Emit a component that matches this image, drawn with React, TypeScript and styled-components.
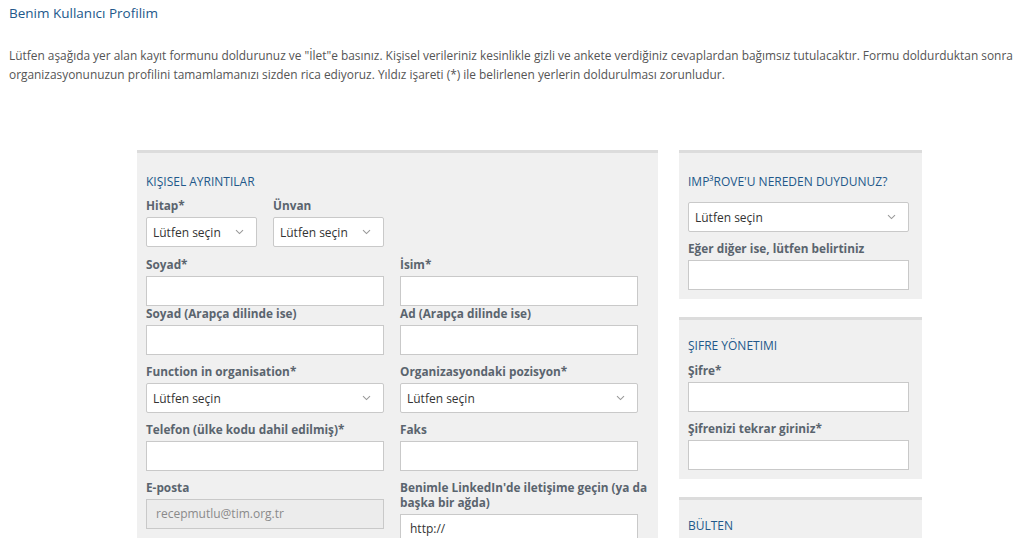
import React from "react";
import styled, { createGlobalStyle } from "styled-components";

const Global = createGlobalStyle`
  html, body { margin: 0; padding: 0; background: #fff; }
  body { font-family: "Open Sans", "Liberation Sans", sans-serif; }
  * { box-sizing: border-box; }
`;

const Page = styled.div`
  padding: 3px 9px 0 9px;
  width: 1024px;
  height: 538px;
  overflow: hidden;
`;

const Title = styled.h1`
  margin: 0;
  font-size: 13.5px;
  font-weight: 400;
  line-height: 20px;
  color: #22588a;
`;

const Intro = styled.p`
  margin: 23px 0 0 0;
  font-size: 11.9px;
  line-height: 19px;
  color: #555;
  white-space: nowrap;
`;

const Columns = styled.div`
  display: flex;
  gap: 21px;
  margin: 66px 0 0 128px;
  align-items: flex-start;
`;

const Side = styled.div`
  display: flex;
  flex-direction: column;
  gap: 18px;
`;

const Panel = styled.section<{ $w: number; $minH?: number; $pt?: number }>`
  width: ${(p) => p.$w}px;
  min-height: ${(p) => p.$minH ?? 0}px;
  background: #f0f0f0;
  border-top: 3px solid #dcdcdc;
  padding: ${(p) => p.$pt ?? 20}px 13px 9px 9px;
  & > *:last-child {
    margin-bottom: 0;
  }
`;

const Heading = styled.h2<{ $mb?: number }>`
  margin: 0 0 ${(p) => p.$mb ?? 7}px 0;
  font-size: 12px;
  font-weight: 400;
  line-height: 18px;
  color: #22588a;
  text-transform: uppercase;
`;

const Grid = styled.div`
  display: grid;
  grid-template-columns: 238px 238px;
  column-gap: 16px;
  align-items: end;
`;

const Field = styled.div<{ $mt?: number; $top?: boolean }>`
  display: flex;
  flex-direction: column;
  margin-top: ${(p) => p.$mt ?? 0}px;
  margin-bottom: 9px;
  align-self: ${(p) => (p.$top ? "start" : "auto")};
`;

const Label = styled.label`
  font-size: 11.8px;
  font-weight: 700;
  line-height: 15px;
  color: #5a646e;
  margin-bottom: 4px;
  white-space: nowrap;
`;

const Input = styled.div<{ $disabled?: boolean }>`
  height: 30px;
  border: 1px solid #c9c9c9;
  background: ${(p) => (p.$disabled ? "#ececec" : "#fff")};
  color: ${(p) => (p.$disabled ? "#8a8a8a" : "#333")};
  font-size: 12px;
  line-height: 28px;
  padding: 0 9px;
`;

const SelectBox = styled.div<{ $w?: number }>`
  height: 30px;
  width: ${(p) => (p.$w ? `${p.$w}px` : "100%")};
  border: 1px solid #c9c9c9;
  border-radius: 2px;
  background: #fff;
  display: flex;
  align-items: center;
  justify-content: space-between;
  padding: 0 12px 0 6px;
  font-size: 12px;
  color: #333;
`;

const Row = styled.div`
  display: flex;
  gap: 16px;
  padding-bottom: 1px;
`;

const Chevron = () => (
  <svg width="9" height="6" viewBox="0 0 9 6">
    <path d="M1 1.2 L4.5 4.6 L8 1.2" fill="none" stroke="#999" strokeWidth="1.1" />
  </svg>
);

const Select = ({ w }: { w?: number }) => (
  <SelectBox $w={w}>
    <span>Lütfen seçin</span>
    <Chevron />
  </SelectBox>
);

export default function App() {
  return (
    <Page>
      <Global />
      <Title>Benim Kullanıcı Profilim</Title>
      <Intro>
        Lütfen aşağıda yer alan kayıt formunu doldurunuz ve "İlet"e basınız. Kişisel verileriniz kesinlikle gizli ve ankete
        verdiğiniz cevaplardan bağımsız tutulacaktır. Formu doldurduktan sonra
        <br />
        organizasyonunuzun profilini tamamlamanızı sizden rica ediyoruz. Yıldız işareti (*) ile belirlenen yerlerin
        doldurulması zorunludur.
      </Intro>
      <Columns>
        <Panel $w={521} $minH={420}>
          <Heading>Kişisel ayrıntılar</Heading>
          <Row>
            <Field>
              <Label>Hitap*</Label>
              <Select w={111} />
            </Field>
            <Field>
              <Label>Ünvan</Label>
              <Select w={111} />
            </Field>
          </Row>
          <Grid>
            <Field>
              <Label>Soyad*</Label>
              <Input />
            </Field>
            <Field>
              <Label>İsim*</Label>
              <Input />
            </Field>
            <Field $mt={-9}>
              <Label>Soyad (Arapça dilinde ise)</Label>
              <Input />
            </Field>
            <Field $mt={-9}>
              <Label>Ad (Arapça dilinde ise)</Label>
              <Input />
            </Field>
            <Field>
              <Label>Function in organisation*</Label>
              <Select />
            </Field>
            <Field>
              <Label>Organizasyondaki pozisyon*</Label>
              <Select />
            </Field>
            <Field>
              <Label>Telefon (ülke kodu dahil edilmiş)*</Label>
              <Input />
            </Field>
            <Field>
              <Label>Faks</Label>
              <Input />
            </Field>
            <Field $top>
              <Label>E-posta</Label>
              <Input $disabled>recepmutlu@tim.org.tr</Input>
            </Field>
            <Field $top>
              <Label>
                Benimle LinkedIn'de iletişime geçin (ya da
                <br />
                başka bir ağda)
              </Label>
              <Input>http://</Input>
            </Field>
          </Grid>
        </Panel>
        <Side>
          <Panel $w={243}>
            <Heading $mb={11}>IMP³ROVE'U NEREDEN DUYDUNUZ?</Heading>
            <Field>
              <Select />
            </Field>
            <Field>
              <Label>Eğer diğer ise, lütfen belirtiniz</Label>
              <Input />
            </Field>
          </Panel>
          <Panel $w={243} $pt={17}>
            <Heading $mb={8}>Şifre yönetimi</Heading>
            <Field>
              <Label>Şifre*</Label>
              <Input />
            </Field>
            <Field>
              <Label>Şifrenizi tekrar giriniz*</Label>
              <Input />
            </Field>
          </Panel>
          <Panel $w={243} $minH={80} $pt={17}>
            <Heading>Bülten</Heading>
          </Panel>
        </Side>
      </Columns>
    </Page>
  );
}
